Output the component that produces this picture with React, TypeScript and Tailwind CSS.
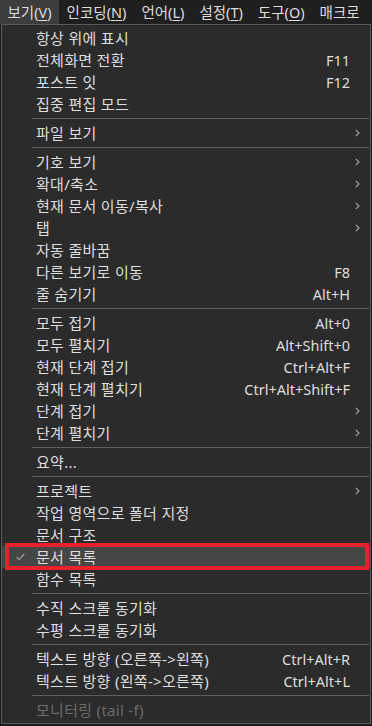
type Item =
  | { kind: "sep" }
  | { kind: "item"; label: string; shortcut?: string; sub?: boolean; checked?: boolean; disabled?: boolean; marked?: boolean };

const items: Item[] = [
  { kind: "item", label: "항상 위에 표시" },
  { kind: "item", label: "전체화면 전환", shortcut: "F11" },
  { kind: "item", label: "포스트 잇", shortcut: "F12" },
  { kind: "item", label: "집중 편집 모드" },
  { kind: "sep" },
  { kind: "item", label: "파일 보기", sub: true },
  { kind: "sep" },
  { kind: "item", label: "기호 보기", sub: true },
  { kind: "item", label: "확대/축소", sub: true },
  { kind: "item", label: "현재 문서 이동/복사", sub: true },
  { kind: "item", label: "탭", sub: true },
  { kind: "item", label: "자동 줄바꿈" },
  { kind: "item", label: "다른 보기로 이동", shortcut: "F8" },
  { kind: "item", label: "줄 숨기기", shortcut: "Alt+H" },
  { kind: "sep" },
  { kind: "item", label: "모두 접기", shortcut: "Alt+0" },
  { kind: "item", label: "모두 펼치기", shortcut: "Alt+Shift+0" },
  { kind: "item", label: "현재 단계 접기", shortcut: "Ctrl+Alt+F" },
  { kind: "item", label: "현재 단계 펼치기", shortcut: "Ctrl+Alt+Shift+F" },
  { kind: "item", label: "단계 접기", sub: true },
  { kind: "item", label: "단계 펼치기", sub: true },
  { kind: "sep" },
  { kind: "item", label: "요약..." },
  { kind: "sep" },
  { kind: "item", label: "프로젝트", sub: true },
  { kind: "item", label: "작업 영역으로 폴더 지정" },
  { kind: "item", label: "문서 구조" },
  { kind: "item", label: "문서 목록", checked: true, marked: true },
  { kind: "item", label: "함수 목록" },
  { kind: "sep" },
  { kind: "item", label: "수직 스크롤 동기화" },
  { kind: "item", label: "수평 스크롤 동기화" },
  { kind: "sep" },
  { kind: "item", label: "텍스트 방향 (오른쪽->왼쪽)", shortcut: "Ctrl+Alt+R" },
  { kind: "item", label: "텍스트 방향 (왼쪽->오른쪽)", shortcut: "Ctrl+Alt+L" },
  { kind: "sep" },
  { kind: "item", label: "모니터링 (tail -f)", disabled: true },
];

const bar = [
  { name: "보기", key: "V" },
  { name: "인코딩", key: "N" },
  { name: "언어", key: "L" },
  { name: "설정", key: "T" },
  { name: "도구", key: "O" },
  { name: "매크로" },
];

function Chevron() {
  return (
    <svg width="5" height="8" viewBox="0 0 5 8" fill="none">
      <path d="M0.8 0.8 L4 4 L0.8 7.2" stroke="#a8a8a8" strokeWidth="1.1" />
    </svg>
  );
}

function Check() {
  return (
    <svg width="9" height="8" viewBox="0 0 9 8" fill="none">
      <path d="M0.7 4.2 L3.1 6.6 L8.3 0.9" stroke="#a0a0a0" strokeWidth="1.3" />
    </svg>
  );
}

export default function App() {
  return (
    <div
      className="w-[372px] h-[726px] overflow-hidden bg-[#1c1c1c] text-[14.5px] text-[#dedede]"
      style={{ fontFamily: '"Noto Sans", "Noto Sans CJK KR", sans-serif' }}
    >
      <div className="flex h-[24px] items-center bg-[#1f1f1f]">
        {bar.map((b, i) => (
          <div
            key={b.name}
            className={`flex h-full items-center px-[7.5px] leading-none ${i === 0 ? "bg-[#3c3c3c]" : ""}`}
          >
            {b.name}
            {b.key ? (
              <>
                (<span className="underline underline-offset-2">{b.key}</span>)
              </>
            ) : null}
          </div>
        ))}
      </div>

      <div className="ml-[1px] w-[370px] border border-[#5a5a5a] bg-[#2b2b2b] py-[2px]">
        {items.map((it, i) =>
          it.kind === "sep" ? (
            <div key={i} className="py-[3px] pl-[30px] pr-[1px]">
              <div className="h-px bg-[#5e5e5e]" />
            </div>
          ) : (
            <div
              key={i}
              className={`relative flex h-[22px] items-center leading-none ${it.marked ? "bg-[#464646]" : ""} ${it.disabled ? "text-[#6c6c6c]" : ""}`}
            >
              <div className="flex w-[34px] justify-center pl-[3px]">{it.checked ? <Check /> : null}</div>
              <div className="flex-1 whitespace-nowrap text-[15px] tracking-[0.3px]">{it.label}</div>
              {it.shortcut ? <div className="whitespace-nowrap">{it.shortcut}</div> : null}
              <div className="flex w-[20px] pl-[5px]">{it.sub ? <Chevron /> : null}</div>
              {it.marked ? (
                <div className="absolute left-[3px] right-[1px] top-[-3px] bottom-[-2px] border-4 border-[#e8212b]" />
              ) : null}
            </div>
          )
        )}
      </div>
    </div>
  );
}
